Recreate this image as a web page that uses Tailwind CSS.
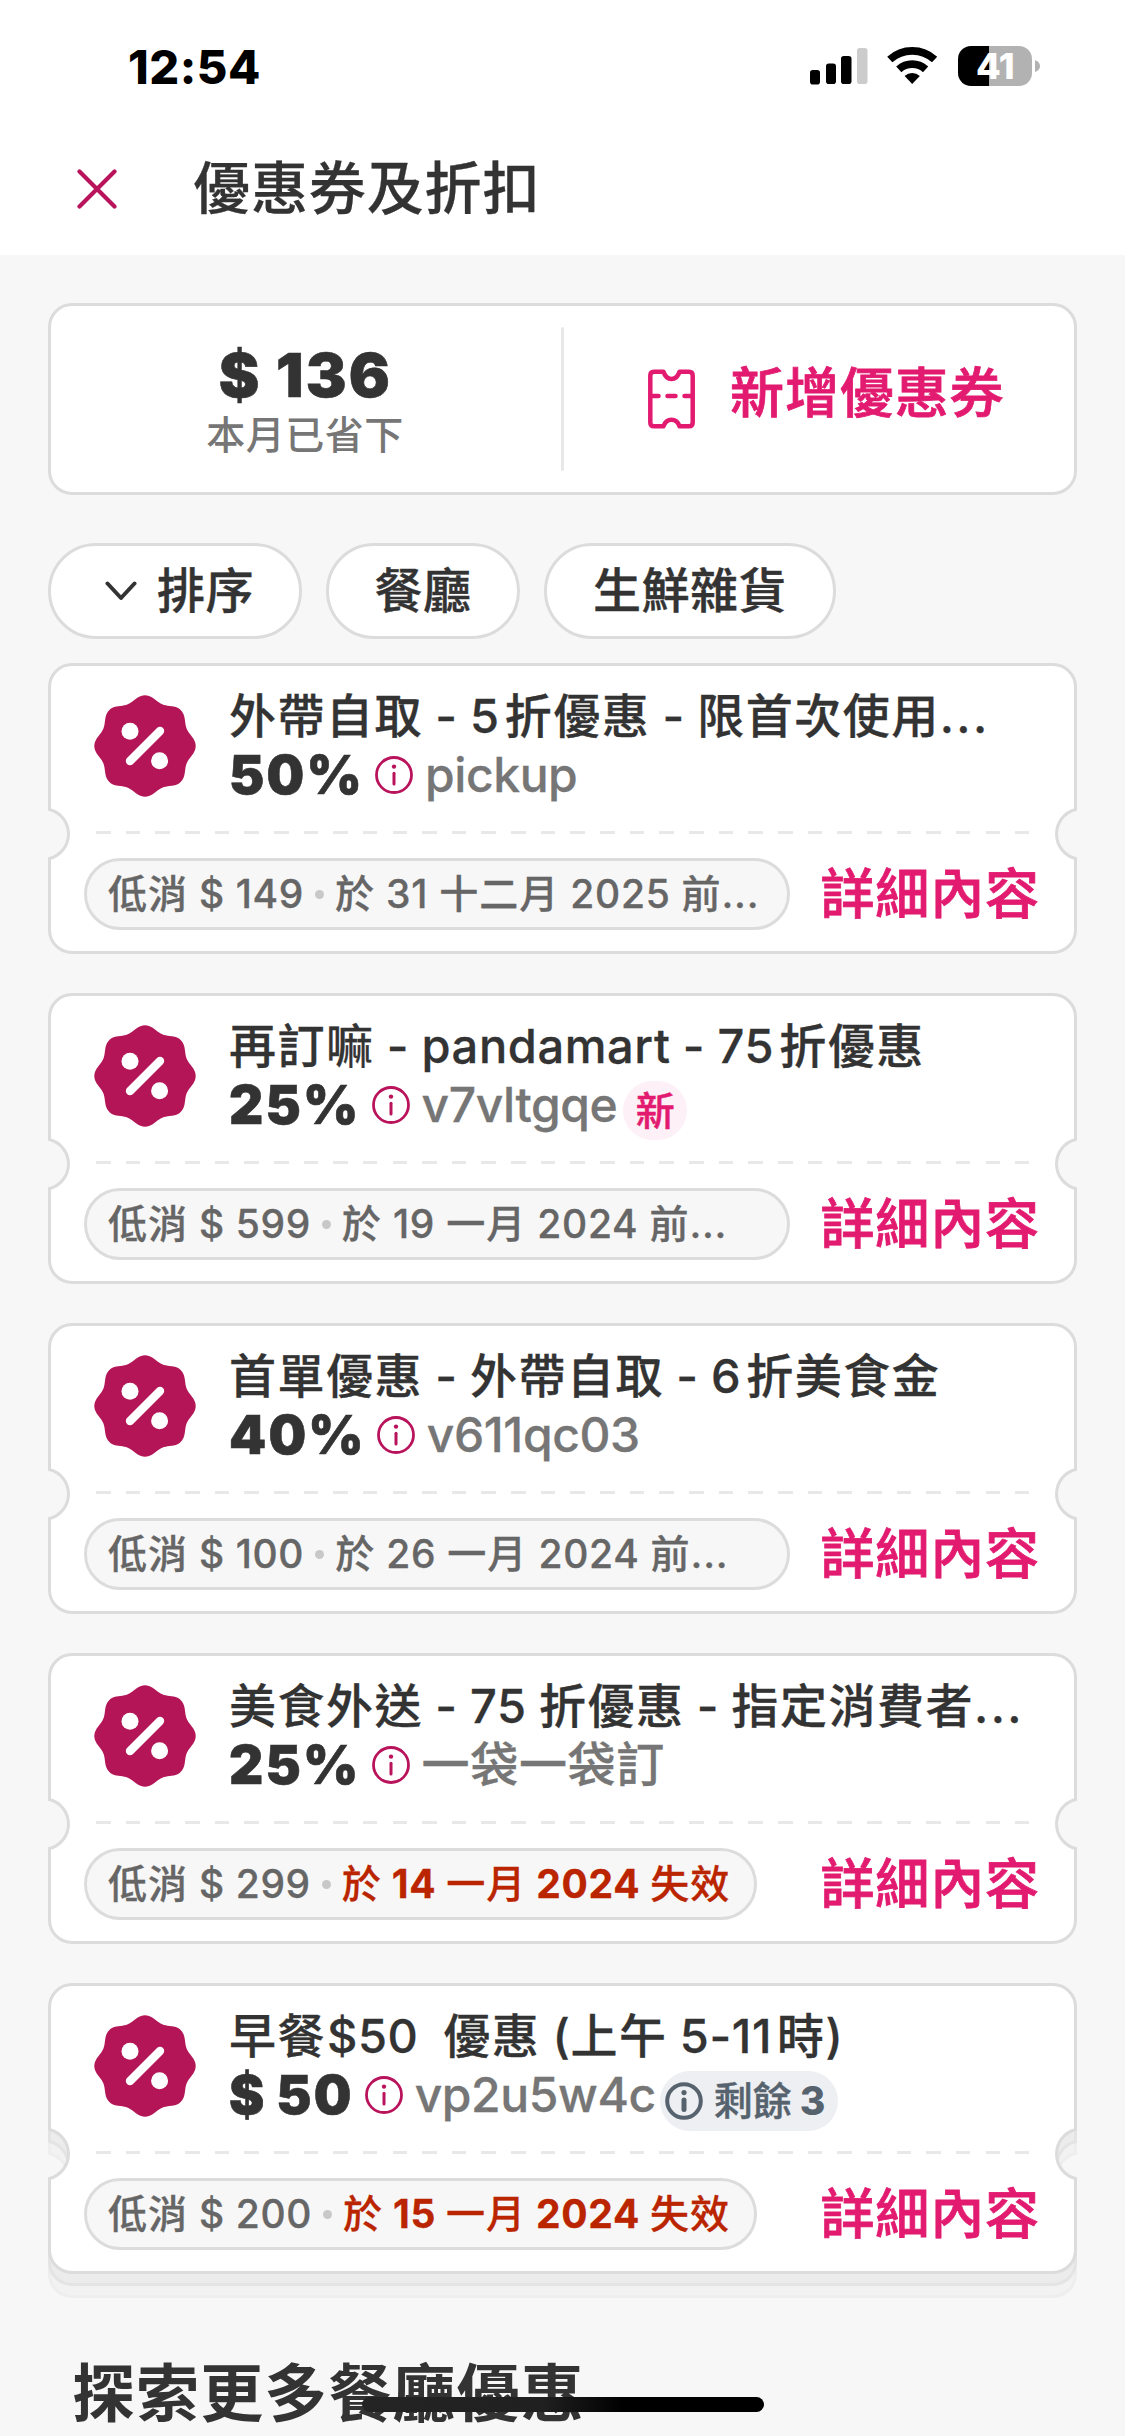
<!DOCTYPE html>
<html lang="zh-Hant">
<head>
<meta charset="utf-8">
<title>優惠券及折扣</title>
<script src="https://cdn.jsdelivr.net/npm/@tailwindcss/browser@4"></script>
</head>
<body class="w-[1125px] h-[2436px] overflow-hidden relative bg-[#f7f7f7] text-[#333333] font-['Inter','Noto_Sans_CJK_TC',sans-serif]">

<svg width="0" height="0" class="absolute">
  <defs>
    <symbol id="info" viewBox="0 0 38 38">
      <circle cx="19" cy="19" r="17.5" fill="none" stroke="currentColor" stroke-width="2.8"/>
      <circle cx="19" cy="10.6" r="2.2" fill="currentColor"/>
      <path d="M19 17.2V28" stroke="currentColor" stroke-width="3" stroke-linecap="round"/>
    </symbol>
    <symbol id="ticket" viewBox="0 0 1029 291">
      <path d="M24 1.5H1005A22.5 22.5 0 0 1 1027.5 24V146.5A25.3 25.3 0 0 0 1027.5 195.500V267A22.500 22.500 0 0 1 1005 289.500H24A22.500 22.500 0 0 1 1.500 267V195.500A25.300 25.300 0 0 0 1.500 146.500V24A22.500 22.500 0 0 1 24 1.500Z" fill="var(--fill)" stroke="var(--line)" stroke-width="3"/>
    </symbol>
  </defs>
</svg>

<header class="h-[255px] bg-white">
  <div class="h-[132px] flex items-start justify-between pl-[128px] pr-[85px]">
    <div class="mt-[39px] leading-[56px] text-[47px] font-extrabold text-black tracking-[0.5px]">12:54</div>
    <div class="flex mt-[46px] h-10">
      <svg width="58" height="40" viewBox="0 0 58 40">
        <rect x="0" y="24" width="10" height="14.500" rx="2.800"/>
        <rect x="16" y="17.500" width="10" height="20.500" rx="2.800"/>
        <rect x="31" y="10" width="10.500" height="28" rx="2.800"/>
        <rect x="47" y="2" width="10.500" height="36" rx="2.800" fill="#cccccc"/>
      </svg>
      <svg class="ml-[19px]" width="51" height="40" viewBox="0 -1 51 40">
        <path d="M2.800 12.500A33.200 33.200 0 0 1 47.600 12.500M11.800 22.400A19.800 19.800 0 0 1 38.600 22.400" fill="none" stroke="#000" stroke-width="7.700"/>
        <path d="M25.200 37L17.600 28.900A11.300 11.300 0 0 1 32.800 28.900Z"/>
      </svg>
      <div class="ml-5 w-[74px] h-10 rounded-[13px] bg-[linear-gradient(to_right,#000_31px,#b2b2b2_31px)] text-white text-[36px] leading-10 font-extrabold text-center tracking-[-0.6px]">41</div>
      <svg class="ml-[3px]" width="5" height="40" viewBox="0 0 5 40"><path d="M0 14Q5 16 5 20T0 26Z" fill="#b2b2b2"/></svg>
    </div>
  </div>
  <div class="flex items-center h-[114px] pl-[77px]">
    <svg width="40" height="40" viewBox="0 0 40 40" class="text-[#b9135c]"><path d="M2.500 2.500L37.500 37.500M37.500 2.500L2.500 37.500" stroke="currentColor" stroke-width="4.200" stroke-linecap="round"/></svg>
    <h1 class="ml-[76px] text-[57px] leading-[70px] font-medium tracking-[0.9px] [-webkit-text-stroke:0.3px]">優惠券及折扣</h1>
  </div>
</header>

<main class="px-12 pt-12">
  <section class="h-[192px] flex bg-white border-[3px] border-[#dcdcdc] rounded-[24px]">
    <div class="w-[510px] flex flex-col items-center pt-[36px]">
      <div class="-ml-px text-[61px] leading-[66px] font-black tracking-[2.2px] [-webkit-text-stroke:0.6px]">$ 136</div>
      <div class="mt-px -ml-[2px] text-[39px] leading-[52px] font-medium text-[#767676] tracking-[0.5px]">本月已省下</div>
    </div>
    <div class="w-[3px] h-36 mt-[21px] bg-[#e8e8e8] rounded-full"></div>
    <div class="flex text-[#e21b70] pl-[84px]">
      <svg class="mt-[63px]" width="47" height="60" viewBox="0 0 47 60" fill="none" stroke="currentColor" stroke-width="4.500" stroke-linejoin="round" stroke-linecap="round">
        <path d="M6 2.750H15.500C17 7.500 19.500 10 23.500 10S30 7.500 31.500 2.750H41Q44.700 2.750 44.700 6.500V53.500Q44.700 57.250 41 57.250H31.500C30 53 27.500 50.800 23.500 50.800S17 53 15.500 57.250H6Q2.300 57.250 2.300 53.500V6.500Q2.300 2.750 6 2.750Z"/>
        <path d="M3 27H10.500M19.500 27H27.500M36.500 27H44"/>
      </svg>
      <div class="ml-[35px] mt-[55px] text-[54px] leading-[66px] font-medium tracking-[0.9px] [-webkit-text-stroke:0.8px]">新增優惠券</div>
    </div>
  </section>

  <nav class="mt-12 flex gap-6 text-[48px] leading-[90px] font-medium [-webkit-text-stroke:0.4px]">
    <div class="w-[254px] h-24 flex items-center bg-white border-[3px] border-[#dcdcdc] rounded-full pl-[54px]">
      <svg width="32" height="20" viewBox="0 0 32 20"><path d="M2.500 2.500L16 17L29.500 2.500" fill="none" stroke="#333" stroke-width="4" stroke-linecap="round" stroke-linejoin="round"/></svg>
      <span class="ml-5 tracking-[0.5px]">排序</span>
    </div>
    <div class="w-[194px] h-24 bg-white border-[3px] border-[#dcdcdc] rounded-full text-center tracking-[0.5px]">餐廳</div>
    <div class="w-[292px] h-24 bg-white border-[3px] border-[#dcdcdc] rounded-full text-center tracking-[0.5px]">生鮮雜貨</div>
  </nav>

  <div id="list" class="mt-6 flex flex-col gap-[39px]"></div>

  <h2 class="mt-[81px] pl-[24px] text-[63px] leading-[76px] font-bold tracking-[1.1px]">探索更多餐廳優惠</h2>
</main>

<div class="absolute left-[362px] top-[2397px] w-[402px] h-[15px] rounded-full bg-[linear-gradient(to_right,#242424_0%,#202020_45%,#000_65%)]"></div>

<script>
const lobes = Array.from({length: 161}, (_, i) => {
  const a = i / 160 * Math.PI * 2, r = 47.9 + 2.8 * Math.cos(8 * a);
  return (51 + r * Math.cos(a)).toFixed(2) + ' ' + (51 + r * Math.sin(a)).toFixed(2);
}).join('L');

const badge = `<svg class="shrink-0" width="102" height="102" viewBox="0 0 102 102">
  <path d="M${lobes}Z" fill="#b31557"/>
  <circle cx="36" cy="36.300" r="8.500" fill="#fff"/><circle cx="65.600" cy="65.700" r="8.500" fill="#fff"/>
  <path d="M36 66L66 36" stroke="#fff" stroke-width="8.400" stroke-linecap="round"/></svg>`;

// Latin runs are tracked separately from the ideographs round them.
const latin = (s, cls) => s.replace(/[\x20-\x7e\u00a0]+/g, m => `<span class="${cls}">${m}</span>`);

// Titles also get a thin gap where a digit touches an ideograph, and a wider ellipsis.
const title = s => s.replace(/\.\.\.|[\x20-\x2d\x2f-\x7e\u00a0]+/g, (m, at) => {
  if (m === '...') return `<span class="tracking-[2.4px]">...</span>`;
  const before = at > 0 && /^[$\d]/.test(m) ? 'ml-[1px]' : '';
  const after = /\d$/.test(m) ? 'mr-[5px]' : '';
  return `<span class="tracking-[0.6px] [word-spacing:-0.8px] ${before} ${after}">${m}</span>`;
});

const cards = [
  {title: '外帶自取 - 5折優惠 - 限首次使用...', amount: '50%', code: 'pickup', min: '低消 $ 149', until: '於 31 十二月 2025 前...', wide: true},
  {title: '再訂嘛 - pandamart - 75折優惠', amount: '25%', code: 'v7vltgqe', min: '低消 $ 599', until: '於 19 一月 2024 前...', wide: true, tag: 'new'},
  {title: '首單優惠 - 外帶自取 - 6折美食金', amount: '40%', code: 'v611qc03', min: '低消 $ 100', until: '於 26 一月 2024 前...', wide: true},
  {title: '美食外送 - 75 折優惠 - 指定消費者...', amount: '25%', code: '一袋一袋訂', min: '低消 $ 299', until: '於 14 一月 2024 失效', ends: true},
  {title: '早餐$50\u00a0 優惠 (上午 5-11時)', amount: '$ 50', code: 'vp2u5w4c', min: '低消 $ 200', until: '於 15 一月 2024 失效', ends: true, tag: 'left', stack: true},
];

const tags = {
  new: `<span class="ml-[6px] mt-[11px] w-16 h-[59px] rounded-full bg-[#fdf0f6] text-[#e21b70] text-[39px] leading-[59px] font-medium text-center [-webkit-text-stroke:0.5px]">新</span>`,
  left: `<span class="ml-[4px] mt-[11px] w-[178px] h-[60px] rounded-full bg-[#edeff2] text-[#56626d] text-[39px] leading-[60px] font-medium flex items-center pl-[5px]">
    <svg width="38" height="38" viewBox="0 0 38 38"><circle cx="19" cy="19" r="16.800" fill="none" stroke="currentColor" stroke-width="4"/><circle cx="19" cy="10.600" r="2.600" fill="currentColor"/><path d="M19 18V27.500" stroke="currentColor" stroke-width="5" stroke-linecap="round"/></svg>
    <span class="ml-[11px] [-webkit-text-stroke:0.4px]">剩餘</span><b class="ml-[8px] font-extrabold">3</b></span>`,
};

const ticket = (cls) => `<svg class="absolute left-0 w-[1029px] h-[291px] ${cls}"><use href="#ticket"/></svg>`;

document.getElementById('list').innerHTML = cards.map(c => `
  <article class="relative w-[1029px] h-[291px]">
    ${c.stack ? ticket('top-6 [--fill:#f2f2f2] [--line:#eeeeee]') + ticket('top-3 [--fill:#ececec] [--line:#e4e4e4]') : ''}
    ${ticket('top-0 [--fill:#ffffff] [--line:#dcdcdc]')}
    <div class="relative h-[168px] pt-[23px] pl-[46px] flex">
      <div class="pt-[9px]">${badge}</div>
      <div class="ml-[33px]">
        <div class="h-[60px] text-[47px] leading-[59px] font-medium tracking-[1.5px] whitespace-nowrap [-webkit-text-stroke:0.3px]">${title(c.title)}</div>
        <div class="h-[58px] flex items-center whitespace-nowrap">
          <span class="text-[53px] leading-[58px] font-black tracking-[2.2px] [word-spacing:-3px] [-webkit-text-stroke:0.6px]">${c.amount}</span>
          <svg class="ml-[11px] w-[38px] h-[38px] text-[#b9135c]"><use href="#info"/></svg>
          <span class="ml-[12px] text-[48px] leading-[58px] font-medium text-[#767676] tracking-[0.7px] [-webkit-text-stroke:0.3px]">${latin(c.code, 'tracking-[-0.4px]')}</span>
          ${c.tag ? tags[c.tag] : ''}
        </div>
      </div>
    </div>
    <div class="relative mx-12 h-[3px] bg-[repeating-linear-gradient(to_right,#e8e8e8_0,#e8e8e8_14.6px,transparent_14.6px,transparent_29.65px)]"></div>
    <div class="relative mt-6 pl-9 pr-[37px] flex items-center justify-between">
      <div class="h-[72px] bg-[#f7f7f7] border-[3px] border-[#dcdcdc] rounded-full flex items-center text-[39px] leading-[66px] font-medium text-[#666666] tracking-[1px] whitespace-nowrap pl-[21px] [-webkit-text-stroke:0.3px] ${c.wide ? 'w-[706px]' : 'w-[673px]'}">
        <span>${latin(c.min, 'tracking-[0.6px]')}</span>
        <span class="mx-[11px] size-[9px] rounded-full bg-[#c8c8c8]"></span>
        <span class="${c.ends ? 'text-[#ba2500]' : ''}">${latin(c.until, c.ends ? 'font-bold tracking-[0.7px]' : 'tracking-[0.7px]')}</span>
      </div>
      <span class="pt-[2px] text-[54px] leading-[70px] font-medium text-[#e21b70] tracking-[0.9px] [-webkit-text-stroke:0.8px]">詳細內容</span>
    </div>
  </article>`).join('');
</script>
</body>
</html>
